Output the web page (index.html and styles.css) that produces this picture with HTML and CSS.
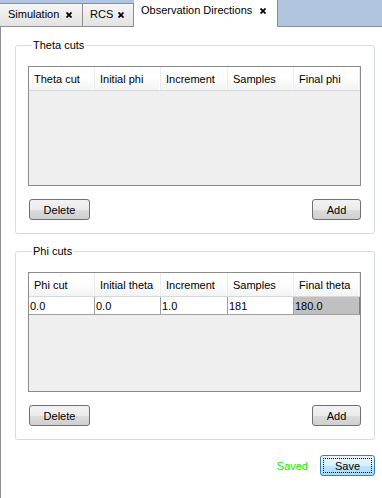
FILE: index.html
```html
<!DOCTYPE html>
<html>
<head>
<meta charset="utf-8">
<link rel="stylesheet" href="styles.css">
</head>
<body>
<div class="window">
  <div class="tabbar">
    <div class="tab t-sim">Simulation<span class="close"><svg width="6" height="6" viewBox="0 0 6 6"><path d="M0.5 0.5 L5.5 5.5 M5.5 0.5 L0.5 5.5" stroke="#000" stroke-width="1.8"/></svg></span></div>
    <div class="tab t-rcs">RCS<span class="close"><svg width="6" height="6" viewBox="0 0 6 6"><path d="M0.5 0.5 L5.5 5.5 M5.5 0.5 L0.5 5.5" stroke="#000" stroke-width="1.8"/></svg></span></div>
    <div class="tab active">Observation Directions<span class="close"><svg width="6" height="6" viewBox="0 0 6 6"><path d="M0.5 0.5 L5.5 5.5 M5.5 0.5 L0.5 5.5" stroke="#000" stroke-width="1.8"/></svg></span></div>
  </div>
  <div class="pane">
    <fieldset class="group">
      <legend>Theta cuts</legend>
      <div class="table">
        <div class="thead">
          <div class="th">Theta cut</div>
          <div class="th">Initial phi</div>
          <div class="th">Increment</div>
          <div class="th">Samples</div>
          <div class="th">Final phi</div>
        </div>
      </div>
      <div class="actions">
        <button class="btn del">Delete</button>
        <button class="btn add">Add</button>
      </div>
    </fieldset>
    <fieldset class="group">
      <legend>Phi cuts</legend>
      <div class="table">
        <div class="thead">
          <div class="th">Phi cut</div>
          <div class="th">Initial theta</div>
          <div class="th">Increment</div>
          <div class="th">Samples</div>
          <div class="th">Final theta</div>
        </div>
        <div class="row">
          <div class="td">0.0</div>
          <div class="td">0.0</div>
          <div class="td">1.0</div>
          <div class="td">181</div>
          <div class="td sel">180.0</div>
        </div>
      </div>
      <div class="actions">
        <button class="btn del">Delete</button>
        <button class="btn add">Add</button>
      </div>
    </fieldset>
    <div class="footer">
      <span class="saved">Saved</span>
      <button class="btn save"><span class="focus">Save</span></button>
    </div>
  </div>
</div>
</body>
</html>
```

FILE: styles.css
```css
* { box-sizing: border-box; }
html, body {
  margin: 0;
  padding: 0;
  background: #ffffff;
}
body {
  font-family: "Liberation Sans", Arial, sans-serif;
  font-size: 11px;
  color: #000;
}
.window {
  width: 382px;
  height: 498px;
  overflow: hidden;
  display: flex;
  flex-direction: column;
}
.tabbar {
  display: flex;
  align-items: flex-end;
  height: 27px;
  background: #b1c5de;
  border-bottom: 1px solid #8d8d8d;
  flex: none;
}
.tab {
  display: flex;
  align-items: center;
  justify-content: space-between;
  height: 23px;
  padding: 0 9px 1px 7px;
  border: 1px solid #8d8d8d;
  border-bottom: none;
  border-left: none;
  background: linear-gradient(#f6f6f6, #e2e2e2);
  line-height: 13px;
  flex: none;
}
.tab.t-sim { width: 83px; padding-left: 8px; padding-right: 10px; }
.tab.t-rcs { width: 51px; }
.tab .close { display: flex; }
.tab.active {
  width: 144px;
  height: 27px;
  margin-bottom: -1px;
  background: #ffffff;
  border-top: none;
  padding: 0 11px 6px 7px;
}
.pane {
  flex: 1;
  border-left: 1px solid #8d8d8d;
  padding: 12px 7px 0 14px;
  display: flex;
  flex-direction: column;
}
.group {
  margin: 0 0 11px 0;
  padding: 14px 13px 13px 12px;
  border: 1px solid #d3dbe3;
  border-radius: 3px;
  min-width: 0;
}
.group legend {
  padding: 0 1px;
  margin-left: 4px;
  line-height: 13px;
}
.table {
  height: 120px;
  border: 1px solid #8a8a8a;
  background: #efefef;
}
.thead {
  display: grid;
  grid-template-columns: 66px 66px 67px 66px 1fr;
  height: 24px;
  background: linear-gradient(#ffffff 0%, #ffffff 40%, #f2f3f5 100%);
  border-bottom: 1px solid #d8d8d8;
}
.th {
  display: flex;
  align-items: center;
  padding: 0 5px;
  border-right: 1px solid #eaebed;
  box-shadow: inset -1px 0 0 #ffffff;
}
.row {
  display: grid;
  grid-template-columns: 66px 66px 67px 66px 1fr;
  height: 18px;
}
.td {
  background: #ffffff;
  border-right: 1px solid #a0a0a0;
  border-bottom: 1px solid #a0a0a0;
  padding: 2px 1px 0;
  line-height: 14px;
}
.td.sel {
  background: #c0c0c0;
  border-right-color: #808080;
}
.actions {
  display: flex;
  justify-content: space-between;
  margin-top: 13px;
  padding-left: 1px;
}
.btn {
  font-family: "Liberation Sans", Arial, sans-serif;
  font-size: 11px;
  color: #000;
  height: 21px;
  border: 1px solid #707070;
  border-radius: 3px;
  background: linear-gradient(#f2f2f2 0%, #ebebeb 50%, #dddddd 51%, #cfcfcf 100%);
  padding: 0;
  margin: 0;
}
.btn.del { width: 61px; }
.btn.add { width: 49px; }
.footer {
  display: flex;
  align-items: center;
  justify-content: flex-end;
  gap: 12px;
  margin-top: 4px;
}
.saved {
  color: #00f000;
  font-size: 11px;
}
.btn.save {
  width: 55px;
  height: 21px;
  border-color: #3c7fb1;
  background: linear-gradient(#eaf6fd 0%, #d9f0fc 50%, #bee6fd 51%, #a7d9f5 100%);
  padding: 2px;
}
.btn.save .focus {
  display: flex;
  align-items: center;
  justify-content: center;
  width: 100%;
  height: 100%;
  border: 1px dotted #000;
}
```
